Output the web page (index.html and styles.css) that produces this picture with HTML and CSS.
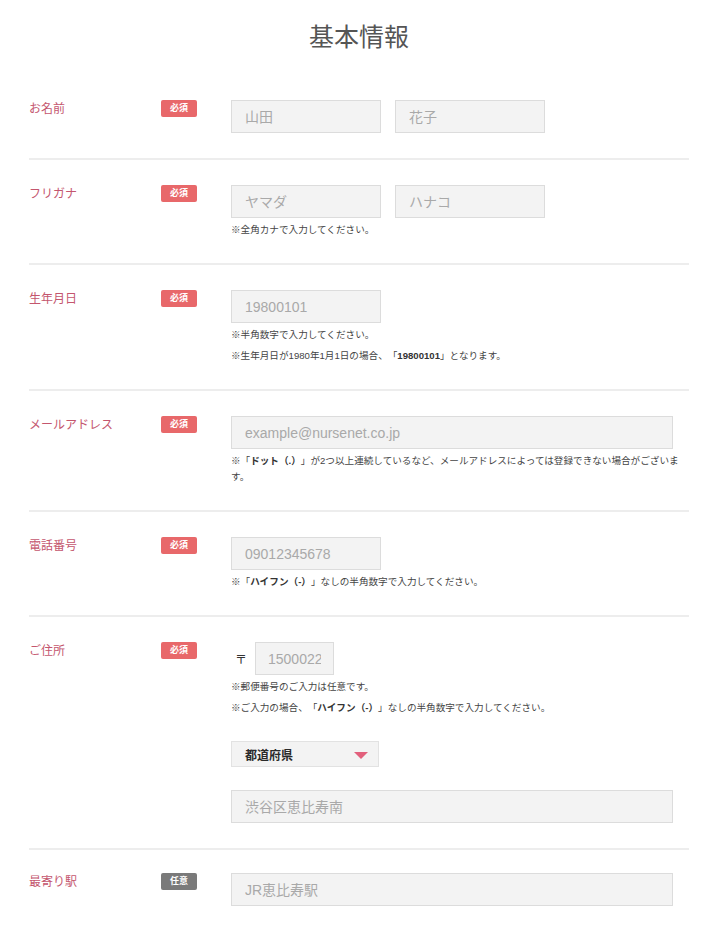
FILE: index.html
```html
<!DOCTYPE html>
<html lang="ja">
<head>
    <meta charset="UTF-8">
    <meta name="viewport" content="width=device-width, initial-scale=1.0">
    <title>基本情報</title>
    <link rel="stylesheet" href="styles.css">
</head>
<body>
    <div class="container">
        <h1>基本情報</h1>

        <form class="form">
            <div class="row">
                <div class="label">お名前</div>
                <div class="badge">必須</div>
                <div class="field">
                    <div class="pair">
                        <input type="text" class="input half" placeholder="山田">
                        <input type="text" class="input half" placeholder="花子">
                    </div>
                </div>
            </div>

            <div class="row">
                <div class="label">フリガナ</div>
                <div class="badge">必須</div>
                <div class="field">
                    <div class="pair">
                        <input type="text" class="input half" placeholder="ヤマダ">
                        <input type="text" class="input half" placeholder="ハナコ">
                    </div>
                    <p class="note">※全角カナで入力してください。</p>
                </div>
            </div>

            <div class="row">
                <div class="label">生年月日</div>
                <div class="badge">必須</div>
                <div class="field">
                    <input type="text" class="input half" placeholder="19800101">
                    <p class="note">※半角数字で入力してください。</p>
                    <p class="note">※生年月日が1980年1月1日の場合、「<b>19800101</b>」となります。</p>
                </div>
            </div>

            <div class="row">
                <div class="label">メールアドレス</div>
                <div class="badge">必須</div>
                <div class="field">
                    <input type="text" class="input full" placeholder="example@nursenet.co.jp">
                    <p class="note">※「<b>ドット（.）</b>」が2つ以上連続しているなど、メールアドレスによっては登録できない場合がございます。</p>
                </div>
            </div>

            <div class="row">
                <div class="label">電話番号</div>
                <div class="badge">必須</div>
                <div class="field">
                    <input type="text" class="input half" placeholder="09012345678">
                    <p class="note">※「<b>ハイフン（-）</b>」なしの半角数字で入力してください。</p>
                </div>
            </div>

            <div class="row">
                <div class="label">ご住所</div>
                <div class="badge">必須</div>
                <div class="field">
                    <div class="zip">
                        <span class="zip-mark">〒</span>
                        <input type="text" class="input short" placeholder="1500022">
                    </div>
                    <p class="note">※郵便番号のご入力は任意です。</p>
                    <p class="note">※ご入力の場合、「<b>ハイフン（-）</b>」なしの半角数字で入力してください。</p>
                    <div class="select">
                        <span>都道府県</span>
                        <span class="arrow"></span>
                    </div>
                    <input type="text" class="input full address" placeholder="渋谷区恵比寿南">
                </div>
            </div>

            <div class="row last">
                <div class="label">最寄り駅</div>
                <div class="badge optional">任意</div>
                <div class="field">
                    <input type="text" class="input full" placeholder="JR恵比寿駅">
                </div>
            </div>
        </form>
    </div>
</body>
</html>
```

FILE: styles.css
```css
body {
    font-family: "Liberation Sans", "Noto Sans CJK JP", sans-serif;
    background-color: #fff;
    color: #333;
    margin: 0;
}

.container {
    width: 660px;
    padding: 0 31px 0 29px;
}

h1 {
    margin: 0;
    padding: 20px 0 21px;
    font-size: 25px;
    font-weight: normal;
    line-height: 34px;
    color: #555;
    text-align: center;
}

.row {
    display: flex;
    padding: 25px 0;
    border-bottom: 2px solid #ededed;
}

.row.last {
    border-bottom: none;
    padding-top: 23px;
}

.label {
    width: 132px;
    font-size: 12px;
    line-height: 18px;
    color: #c4566e;
}

.badge {
    width: 36px;
    height: 17px;
    margin-right: 34px;
    background-color: #e8686a;
    border-radius: 2px;
    color: #fff;
    font-size: 9px;
    font-weight: bold;
    line-height: 17px;
    text-align: center;
}

.badge.optional {
    background-color: #7a7a7a;
}

.field {
    flex: 1;
}

.pair {
    display: flex;
    gap: 14px;
}

.input {
    display: block;
    box-sizing: border-box;
    height: 33px;
    padding: 0 13px;
    background-color: #f3f3f3;
    border: 1px solid #dcdcdc;
    border-radius: 0;
    font-family: "Liberation Sans", "Noto Sans CJK JP", sans-serif;
    font-size: 14px;
    color: #333;
}

.input::placeholder {
    color: #a9a9a9;
}

.input.half {
    width: 150px;
}

.input.full {
    width: 442px;
}

.input.short {
    width: 79px;
    padding: 0 12px;
}

.note {
    margin: 4px 0 0;
    font-size: 9.6px;
    line-height: 16px;
    color: #444;
    text-spacing-trim: space-all;
}

.note + .note {
    margin-top: 5px;
}

.note b {
    color: #333;
}

.zip {
    display: flex;
    align-items: center;
}

.zip-mark {
    width: 24px;
    padding-left: 4px;
    box-sizing: border-box;
    font-size: 12px;
    color: #333;
}

.select {
    display: flex;
    align-items: center;
    justify-content: space-between;
    box-sizing: border-box;
    width: 148px;
    height: 26px;
    margin-top: 25px;
    padding: 0 10px 0 13px;
    background-color: #f3f3f3;
    border: 1px solid #e2e2e2;
    font-size: 12px;
    font-weight: bold;
    color: #2a2a2a;
}

.select .arrow {
    width: 0;
    height: 0;
    border-left: 7px solid transparent;
    border-right: 7px solid transparent;
    border-top: 7px solid #e2607c;
    margin-top: 2px;
}

.address {
    margin-top: 23px;
}
```
